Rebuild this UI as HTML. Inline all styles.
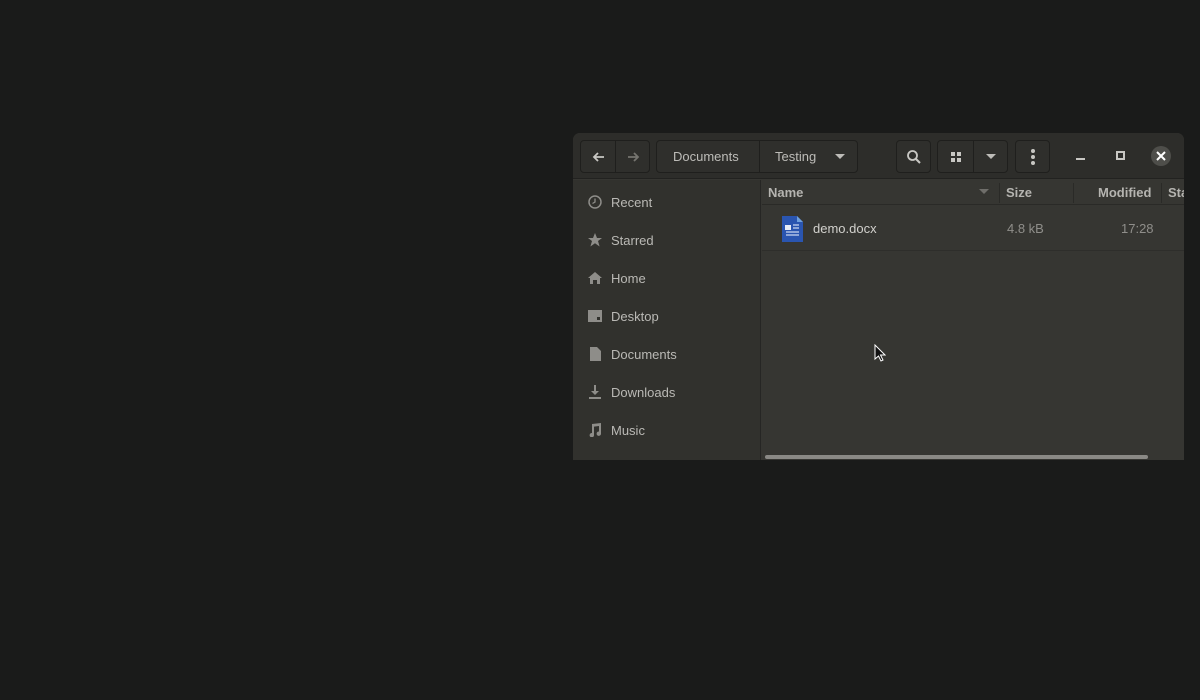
<!DOCTYPE html>
<html><head><style>
*{margin:0;padding:0;box-sizing:border-box}
body{width:1200px;height:700px;background:#1a1b1a;position:relative;overflow:hidden;font-family:"Liberation Sans",sans-serif;font-size:13px;color:#bdbcb8}
.a{position:absolute}
.win{left:573px;top:133px;width:611px;height:327px;background:#363632;border-radius:7px 7px 0 0;overflow:hidden}
.hdr{left:0;top:0;width:611px;height:46px;background:#2d2d2a;border-bottom:1px solid #222220}
.btn{position:absolute;top:7px;height:33px;border:1px solid #1f1f1d;border-radius:4px;background:#2f2f2c}
.side{left:0;top:47px;width:188px;height:280px;background:#31312d;border-right:1px solid #262624}
.si{position:absolute;left:38px;font-size:13px;color:#bab9b5}
.ic{position:absolute;left:15px;width:14px;height:14px}
.col{position:absolute;top:52px;font-weight:bold;color:#b5b4b0}
</style></head><body>
<div class="a win">
 <div class="a hdr">
  <div class="btn" style="left:7px;width:70px"><div class="a" style="left:34px;top:0;width:1px;height:31px;background:#1f1f1d"></div>
   <svg class="a" style="left:10px;top:8px" width="16" height="16"><path d="M13 8H3M7 4L3 8l4 4" stroke="#c8c7c3" stroke-width="1.8" fill="none"/></svg>
   <svg class="a" style="left:44px;top:8px" width="16" height="16"><path d="M3 8h10M9 4l4 4-4 4" stroke="#75746f" stroke-width="1.8" fill="none"/></svg></div>
  <div class="btn" style="left:83px;width:202px"><div class="a" style="left:102px;top:0;width:1px;height:31px;background:#1f1f1d"></div>
   <span class="a" style="left:16px;top:8px;color:#bdbcb8">Documents</span>
   <span class="a" style="left:118px;top:8px;color:#bdbcb8">Testing</span>
   <svg class="a" style="left:178px;top:12px" width="10" height="7"><path d="M0 1h10L5 6z" fill="#bdbcb8"/></svg></div>
  <div class="btn" style="left:323px;width:35px"><svg class="a" style="left:9px;top:8px" width="16" height="16"><circle cx="6.5" cy="6.5" r="4.5" stroke="#c8c7c3" stroke-width="1.8" fill="none"/><path d="M10 10l4 4" stroke="#c8c7c3" stroke-width="2"/></svg></div>
  <div class="btn" style="left:364px;width:71px"><div class="a" style="left:35px;top:0;width:1px;height:31px;background:#1f1f1d"></div>
   <svg class="a" style="left:12px;top:10px" width="12" height="12"><rect x="1" y="1" width="4" height="4" fill="#c8c7c3"/><rect x="7" y="1" width="4" height="4" fill="#c8c7c3"/><rect x="1" y="7" width="4" height="4" fill="#c8c7c3"/><rect x="7" y="7" width="4" height="4" fill="#c8c7c3"/></svg>
   <svg class="a" style="left:48px;top:12px" width="10" height="7"><path d="M0 1h10L5 6z" fill="#bdbcb8"/></svg></div>
  <div class="btn" style="left:442px;width:35px"><svg class="a" style="left:14px;top:7px" width="6" height="18"><circle cx="3" cy="3" r="2" fill="#c8c7c3"/><circle cx="3" cy="9" r="2" fill="#c8c7c3"/><circle cx="3" cy="15" r="2" fill="#c8c7c3"/></svg></div>
  <div class="a" style="left:503px;top:25px;width:9px;height:2px;background:#c8c7c3"></div>
  <div class="a" style="left:543px;top:18px;width:9px;height:9px;border:2px solid #c8c7c3"></div>
  <div class="a" style="left:578px;top:13px;width:20px;height:20px;border-radius:50%;background:#4e4e4a"><svg class="a" style="left:5px;top:5px" width="10" height="10"><path d="M1 1l8 8M9 1l-8 8" stroke="#fff" stroke-width="2"/></svg></div>
 </div>
 <div class="a side">
  <svg class="ic" style="top:15px" width="14" height="14"><circle cx="7" cy="7" r="6" stroke="#8e8d89" stroke-width="1.5" fill="none"/><path d="M7 3.5V7l-2.5 1.5" stroke="#8e8d89" stroke-width="1.3" fill="none"/></svg><span class="si" style="top:15px">Recent</span>
  <svg class="ic" style="top:53px" width="14" height="14"><path d="M7 0l2 5h5l-4 3 1.6 5.5L7 10.3 2.4 13.5 4 8 0 5h5z" fill="#8e8d89"/></svg><span class="si" style="top:53px">Starred</span>
  <svg class="ic" style="top:91px" width="14" height="14"><path d="M7 1l7 6h-2v6H9V9H5v4H2V7H0z" fill="#8e8d89"/></svg><span class="si" style="top:91px">Home</span>
  <svg class="ic" style="top:129px" width="14" height="14"><path d="M0 1h14v12H0z" fill="#8e8d89"/><rect x="9" y="8" width="3" height="3" fill="#31312d"/></svg><span class="si" style="top:129px">Desktop</span>
  <svg class="ic" style="top:167px" width="14" height="14"><path d="M2 0h7l4 4v10H2z" fill="#8e8d89"/></svg><span class="si" style="top:167px">Documents</span>
  <svg class="ic" style="top:205px" width="14" height="14"><path d="M6 0h2v6h3L7 10 3 6h3zM1 12h12v2H1z" fill="#8e8d89"/></svg><span class="si" style="top:205px">Downloads</span>
  <svg class="ic" style="top:243px" width="14" height="14"><path d="M4 1l9-1v10.5a2.2 2.2 0 1 1-2-2V3L6 3.6V12a2.2 2.2 0 1 1-2-2z" fill="#8e8d89"/></svg><span class="si" style="top:243px">Music</span>
 </div>
 <div class="a" style="left:189px;top:47px;width:422px;height:25px;border-bottom:1px solid #2a2a27"></div>
 <div class="a" style="left:426px;top:50px;width:1px;height:20px;background:#2a2a27"></div>
 <div class="a" style="left:500px;top:50px;width:1px;height:20px;background:#2a2a27"></div>
 <div class="a" style="left:588px;top:50px;width:1px;height:20px;background:#2a2a27"></div>
 <span class="col" style="left:195px">Name</span>
 <svg class="a" style="left:406px;top:56px" width="10" height="6"><path d="M0 0h10L5 5z" fill="#6f6e6a"/></svg>
 <span class="col" style="left:433px">Size</span>
 <span class="col" style="left:525px">Modified</span>
 <span class="col" style="left:595px">Sta</span>
 <svg class="a" style="left:208px;top:82px" width="23" height="28"><path d="M1 1h15l6 6v20H1z" fill="#2a55b0"/><path d="M16 1l6 6h-6z" fill="#6fa0de"/><rect x="4" y="10" width="6" height="5" fill="#e6ecf7"/><path d="M12 10h6M12 13h6M5 17h13M5 20h13" stroke="#c9d6ef" stroke-width="1.2"/></svg>
 <span class="a" style="left:240px;top:88px;color:#d2d1cd">demo.docx</span>
 <span class="a" style="left:434px;top:88px;color:#8f8e8a">4.8 kB</span>
 <span class="a" style="left:548px;top:88px;color:#8f8e8a">17:28</span>
 <div class="a" style="left:189px;top:117px;width:422px;height:1px;background:#2e2e2b"></div>
 <div class="a" style="left:192px;top:322px;width:383px;height:4px;border-radius:2px;background:#8a8985"></div>
</div>
<svg class="a" style="left:874px;top:344px" width="12" height="18"><path d="M1 1v14l3.5-3 2.5 5 2-1-2.5-5H11z" fill="#111" stroke="#fff" stroke-width="1"/></svg>
</body></html>
